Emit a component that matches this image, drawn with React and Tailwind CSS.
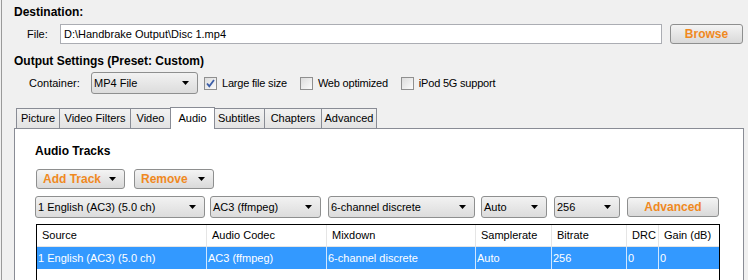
import React from 'react';

const font = "font-['Liberation_Sans',Arial,sans-serif]";

function Arrow() {
  return (
    <svg width="7" height="4" viewBox="0 0 7 4" className="shrink-0">
      <path d="M0 0h7L3.5 4z" fill="#000" />
    </svg>
  );
}

function Select({ value, w }) {
  return (
    <div
      className={`flex h-[22px] items-center justify-between rounded-[3px] border border-[#8e8f8f] bg-gradient-to-b from-[#f2f2f2] to-[#dcdcdc] pl-[2px] pr-[8px] text-[11px] text-black ${w}`}
    >
      <span>{value}</span>
      <Arrow />
    </div>
  );
}

function OrangeButton({ label, w, arrow }) {
  return (
    <div
      className={`flex h-[20px] items-center rounded-[3px] border border-[#8e8f8f] bg-gradient-to-b from-[#f4f4f4] to-[#d9d9d9] text-[12px] font-bold text-[#f0891f] ${w} ${arrow ? 'justify-between pl-[6px] pr-[8px]' : 'justify-center'}`}
    >
      <span>{label}</span>
      {arrow && <Arrow />}
    </div>
  );
}

function Checkbox({ checked, label }) {
  return (
    <div className="flex items-center gap-[5px]">
      <div className="flex h-[13px] w-[13px] items-center justify-center border border-[#8f8f8f] bg-gradient-to-br from-[#dcdcdc] to-[#fbfbfb]">
        {checked && (
          <svg width="9" height="9" viewBox="0 0 9 9">
            <path d="M1 4.5l2.3 2.7L8 1" fill="none" stroke="#3c5ea8" strokeWidth="1.8" />
          </svg>
        )}
      </div>
      <span className="text-[11px] tracking-[-0.2px] text-black">{label}</span>
    </div>
  );
}

const tabs = [
  { name: 'Picture', w: 'w-[44px]' },
  { name: 'Video Filters', w: 'w-[72px]' },
  { name: 'Video', w: 'w-[41px]' },
  { name: 'Audio', w: 'w-[45px]', active: true },
  { name: 'Subtitles', w: 'w-[52px]' },
  { name: 'Chapters', w: 'w-[58px]' },
  { name: 'Advanced', w: 'w-[56px]' },
];

const cols = [
  { h: 'Source', v: '1 English (AC3) (5.0 ch)', w: 'w-[170px]' },
  { h: 'Audio Codec', v: 'AC3 (ffmpeg)', w: 'w-[120px]' },
  { h: 'Mixdown', v: '6-channel discrete', w: 'w-[149px]' },
  { h: 'Samplerate', v: 'Auto', w: 'w-[76px]' },
  { h: 'Bitrate', v: '256', w: 'w-[75px]' },
  { h: 'DRC', v: '0', w: 'w-[32px]' },
  { h: 'Gain (dB)', v: '0', w: 'flex-1' },
];

export default function App() {
  return (
    <div className={`h-[280px] w-[748px] overflow-hidden bg-[#f0f0f0] ${font}`}>
      <div className="ml-[1px] h-full border-l border-[#9a9a9a] pl-[12px]">
        {/* Destination */}
        <div className="pt-[4px] text-[12px] font-bold leading-[16px] text-black">Destination:</div>
        <div className="mt-[4px] flex items-center">
          <span className="w-[46px] pl-[13px] text-[11px] text-black">File:</span>
          <div className="flex h-[20px] w-[602px] items-center border border-[#abadb3] bg-white pl-[3px] text-[11px] text-black">
            D:\Handbrake Output\Disc 1.mp4
          </div>
          <div className="ml-[8px]">
            <OrangeButton label="Browse" w="w-[73px]" />
          </div>
        </div>

        {/* Output settings */}
        <div className="mt-[9px] text-[12px] font-bold leading-[16px] text-black">Output Settings (Preset: Custom)</div>
        <div className="mt-[3px] flex items-center">
          <span className="w-[77px] pl-[15px] text-[11px] text-black">Container:</span>
          <Select value="MP4 File" w="w-[107px]" />
          <div className="ml-[6px] flex items-center gap-[13px]">
            <Checkbox checked label="Large file size" />
            <Checkbox label="Web optimized" />
            <Checkbox label="iPod 5G support" />
          </div>
        </div>

        {/* Tabs */}
        <div className="mt-[13px] flex items-end pl-[2px]">
          {tabs.map((t) =>
            t.active ? (
              <div
                key={t.name}
                className={`relative z-10 -mb-px -ml-px -mr-px flex h-[22px] items-start justify-center border border-b-0 border-[#898c95] bg-white pt-[2px] text-[11px] text-black ${t.w}`}
              >
                {t.name}
              </div>
            ) : (
              <div
                key={t.name}
                className={`-ml-px flex h-[20px] items-center justify-center border border-b-0 border-[#898c95] bg-gradient-to-b from-[#f2f2f2] to-[#e3e3e3] text-[11px] text-black first:ml-0 ${t.w}`}
              >
                {t.name}
              </div>
            )
          )}
        </div>

        {/* Panel */}
        <div className="h-[200px] w-[730px] border border-[#898c95] bg-white pl-[20px] pt-[14px]">
          <div className="text-[12px] font-bold leading-[16px] text-black">Audio Tracks</div>
          <div className="mt-[10px] flex gap-[9px] pl-[1px]">
            <OrangeButton label="Add Track" w="w-[89px]" arrow />
            <OrangeButton label="Remove" w="w-[80px]" arrow />
          </div>
          <div className="mt-[7px] flex items-center">
            <Select value="1 English (AC3) (5.0 ch)" w="w-[170px]" />
            <div className="ml-[5px]"><Select value="AC3 (ffmpeg)" w="w-[111px]" /></div>
            <div className="ml-[7px]"><Select value="6-channel discrete" w="w-[147px]" /></div>
            <div className="ml-[6px]"><Select value="Auto" w="w-[66px]" /></div>
            <div className="ml-[7px]"><Select value="256" w="w-[66px]" /></div>
            <div className="ml-[7px]"><OrangeButton label="Advanced" w="w-[92px]" /></div>
          </div>
          <div className="ml-[1px] mt-[6px] h-[80px] w-[684px] border border-black">
            <div className="flex h-[22px] border-b border-[#e5e5e5]">
              {cols.map((c) => (
                <div
                  key={c.h}
                  className={`flex items-center border-r border-[#e5e5e5] pl-[5px] text-[11px] text-black last:border-r-0 ${c.w}`}
                >
                  {c.h}
                </div>
              ))}
            </div>
            <div className="flex h-[22px] bg-[#3399ff]">
              {cols.map((c) => (
                <div
                  key={c.h}
                  className={`flex items-center border-r border-[#cfe6ff] pl-[1px] text-[11px] text-white last:border-r-0 ${c.w}`}
                >
                  {c.v}
                </div>
              ))}
            </div>
          </div>
        </div>
      </div>
    </div>
  );
}
